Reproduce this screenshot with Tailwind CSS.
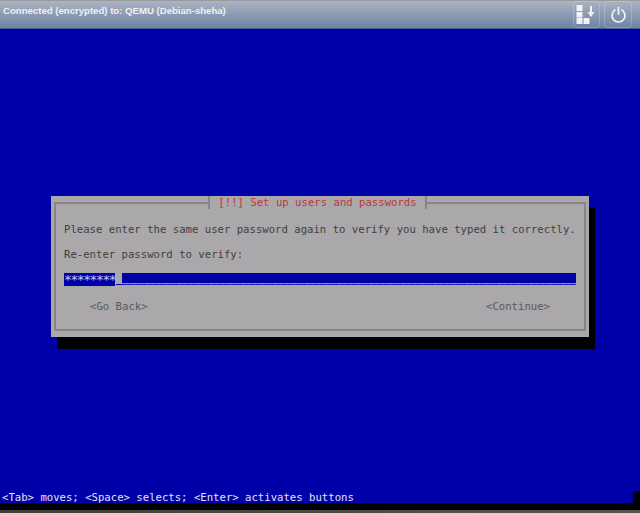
<!DOCTYPE html>
<html lang="en">
  <head>
    <meta charset="UTF-8" />
    <title>Connected (encrypted) to: QEMU (Debian-sheha)</title>
    <script src="https://cdn.jsdelivr.net/npm/@tailwindcss/browser@4"></script>
  </head>
  <body class="w-[640px] h-[513px] overflow-hidden bg-[#0000a8] font-['DejaVu_Sans_Mono',monospace] text-[10.63px] leading-[13px]">
    <!-- Title bar -->
    <header class="h-[29px] flex items-start justify-between border-t border-b border-t-[#9a9a9a] border-b-[#4a5f9a] bg-gradient-to-b from-[#aab3c2] to-[#6e83a3] pl-[3px] pr-[8px]">
      <span class="mt-[4px] font-['Liberation_Sans',sans-serif] font-bold text-[9.6px] leading-[12px] text-[#eef0f4]">Connected (encrypted) to: QEMU (Debian-sheha)</span>
      <div class="flex gap-[4px]">
        <button class="w-[27px] h-[27px] flex items-center justify-center rounded-[4px] border border-white/20" type="button" aria-label="Send keys">
          <svg width="21" height="21" viewBox="0 0 21 21" fill="#f1f3f6">
            <rect x="0.5" y="1" width="6" height="6" />
            <rect x="0.5" y="8" width="6" height="5.5" />
            <rect x="0.5" y="14" width="6" height="6" />
            <rect x="7.5" y="14" width="6" height="6" />
            <path d="M14 2h2v6h2.5L15 13l-3.5-5H14z" />
          </svg>
        </button>
        <button class="w-[28px] h-[27px] flex items-center justify-center rounded-[4px] border border-white/20" type="button" aria-label="Power">
          <svg width="17" height="17" viewBox="0 0 17 17" fill="none" stroke="#f1f3f6" stroke-width="1.7" stroke-linecap="round">
            <path d="M5 4a6.5 6.5 0 1 0 7 0" />
            <path d="M8.5 1.5v6.5" />
          </svg>
        </button>
      </div>
    </header>

    <!-- Installer dialog -->
    <main class="ml-[51px] mt-[167px] w-[538px] h-[141px] bg-[#aaa8aa] shadow-[6px_12px_0_#000] p-[3px] pt-[6px]">
      <div class="relative h-[129px] border-2 border-[#878587] pl-[8px] text-[#3f3f3f]">
        <div class="absolute -top-[8px] left-[152px] h-[13px] w-[219px] flex justify-center bg-[#aaa8aa] border-x-2 border-[#878587] text-[#c8323a]">[!!] Set up users and passwords</div>
        <p class="mt-[19px]">Please enter the same user password again to verify you have typed it correctly.</p>
        <p class="mt-[12px]">Re-enter password to verify:</p>
        <div class="mt-[12px] flex h-[13px] w-[512px]">
          <span class="w-[51px] bg-[#0000a8] pt-[1px] text-[13px] leading-[12px] tracking-[-1.43px] text-[#c8c8e8]">********</span>
          <span class="w-[7px] flex flex-col justify-end pb-[1px] pl-[1px]"><span class="h-[1px] bg-[#0000a8]"></span></span>
          <div class="flex-1 flex flex-col">
            <span class="h-[10px] bg-[#0000a8]"></span>
            <span class="h-[1px] bg-[repeating-linear-gradient(90deg,#8484c4_0,#8484c4_5px,#aaa8aa_5px,#aaa8aa_6.4px)]"></span>
            <span class="h-[1px] bg-[#2020a8]"></span>
          </div>
        </div>
        <div class="mt-[14px] flex w-[512px] justify-between pl-[26px] pr-[26px] text-[#5a5a5a]">
          <span>&lt;Go Back&gt;</span>
          <span>&lt;Continue&gt;</span>
        </div>
      </div>
    </main>

    <!-- Status line -->
    <div class="mt-[154px] h-[12px] bg-black">
      <footer class="w-[633px] h-[12px] pl-[2px] bg-[#0000a8] text-[#e4e4f0] whitespace-pre">&lt;Tab&gt; moves; &lt;Space&gt; selects; &lt;Enter&gt; activates buttons</footer>
    </div>
    <div class="h-[7px] bg-black"></div>
    <div class="h-[3px] bg-gradient-to-r from-[#3f3f3f] to-[#555555]"></div>
  </body>
</html>
